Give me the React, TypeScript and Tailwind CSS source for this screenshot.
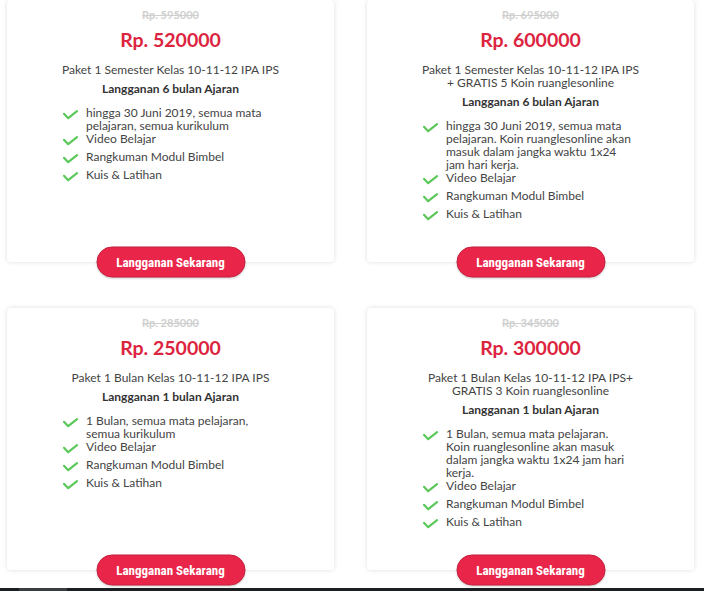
import * as React from "react"

interface Plan {
  oldPrice: string
  price: string
  description: string[]
  subtitle: string
  features: string[][]
}

const PLANS: Plan[] = [
  {
    oldPrice: "Rp. 595000",
    price: "Rp. 520000",
    description: ["Paket 1 Semester Kelas 10-11-12 IPA IPS"],
    subtitle: "Langganan 6 bulan Ajaran",
    features: [
      ["hingga 30 Juni 2019, semua mata", "pelajaran, semua kurikulum"],
      ["Video Belajar"],
      ["Rangkuman Modul Bimbel"],
      ["Kuis & Latihan"],
    ],
  },
  {
    oldPrice: "Rp. 695000",
    price: "Rp. 600000",
    description: ["Paket 1 Semester Kelas 10-11-12 IPA IPS", "+ GRATIS 5 Koin ruanglesonline"],
    subtitle: "Langganan 6 bulan Ajaran",
    features: [
      ["hingga 30 Juni 2019, semua mata", "pelajaran. Koin ruanglesonline akan", "masuk dalam jangka waktu 1x24", "jam hari kerja."],
      ["Video Belajar"],
      ["Rangkuman Modul Bimbel"],
      ["Kuis & Latihan"],
    ],
  },
  {
    oldPrice: "Rp. 285000",
    price: "Rp. 250000",
    description: ["Paket 1 Bulan Kelas 10-11-12 IPA IPS"],
    subtitle: "Langganan 1 bulan Ajaran",
    features: [
      ["1 Bulan, semua mata pelajaran,", "semua kurikulum"],
      ["Video Belajar"],
      ["Rangkuman Modul Bimbel"],
      ["Kuis & Latihan"],
    ],
  },
  {
    oldPrice: "Rp. 345000",
    price: "Rp. 300000",
    description: ["Paket 1 Bulan Kelas 10-11-12 IPA IPS+", "GRATIS 3 Koin ruanglesonline"],
    subtitle: "Langganan 1 bulan Ajaran",
    features: [
      ["1 Bulan, semua mata pelajaran.", "Koin ruanglesonline akan masuk", "dalam jangka waktu 1x24 jam hari", "kerja."],
      ["Video Belajar"],
      ["Rangkuman Modul Bimbel"],
      ["Kuis & Latihan"],
    ],
  },
]

function Check() {
  return (
    <svg width="15" height="10" viewBox="0 0 15 10" fill="none" className="mt-[4px]">
      <path d="M1 3.8 L5.2 8.2 L14 1.2" stroke="#5cc85a" strokeWidth="2.2" strokeLinecap="round" strokeLinejoin="round" />
    </svg>
  )
}

function PlanCard({ plan }: { plan: Plan }) {
  return (
    <div className="relative h-[262px] w-[327px] rounded-[4px] bg-white shadow-[0_0_5px_rgba(0,0,0,0.13)]">
      <div className="flex flex-col items-center pt-[8px]">
        <div className="text-[11px] font-bold leading-[14px] text-[#cfcfcf] line-through">{plan.oldPrice}</div>
        <div className="mt-[6px] text-[19.5px] font-bold leading-[24px] text-[#dc2440]">{plan.price}</div>
        <div className="mt-[11px] text-center text-[12px] leading-[13px] text-[#444]">
          {plan.description.map((line) => (
            <div key={line}>{line}</div>
          ))}
        </div>
        <div className="mt-[6px] text-[12px] font-bold leading-[14px] text-[#333]">{plan.subtitle}</div>
      </div>
      <ul className="mt-[10px] pl-[56px] text-[12px] leading-[13px] text-[#444]">
        {plan.features.map((lines, i) => (
          <li key={i} className="flex min-h-[18px]">
            <div className="h-[18px] w-[23px] shrink-0">
              <Check />
            </div>
            <div>
              {lines.map((line) => (
                <div key={line}>{line}</div>
              ))}
            </div>
          </li>
        ))}
      </ul>
      <button className="absolute bottom-0 left-1/2 h-[31px] w-[149px] -translate-x-1/2 translate-y-1/2 rounded-full border border-[#c81f3d] bg-[#e9264a] text-[13px] font-bold text-white shadow-[0_1px_2px_rgba(0,0,0,0.2)] [font-family:'Liberation_Sans_Narrow','Roboto_Condensed',Roboto,sans-serif]">
        Langganan Sekarang
      </button>
    </div>
  )
}

export default function App() {
  return (
    <div className="relative h-[591px] w-[704px] overflow-hidden bg-white [font-family:Lato,'Noto_Sans',sans-serif]">
      <div className="grid grid-cols-[327px_327px] gap-x-[33px] gap-y-[46px] pl-[7px]">
        {PLANS.map((plan) => (
          <PlanCard key={plan.price} plan={plan} />
        ))}
      </div>
      <div className="absolute bottom-0 left-0 flex h-[3px] w-full bg-[#1b1f22]">
        <div className="ml-[19px] h-full w-[48px] bg-[#3a3d40]" />
      </div>
    </div>
  )
}
